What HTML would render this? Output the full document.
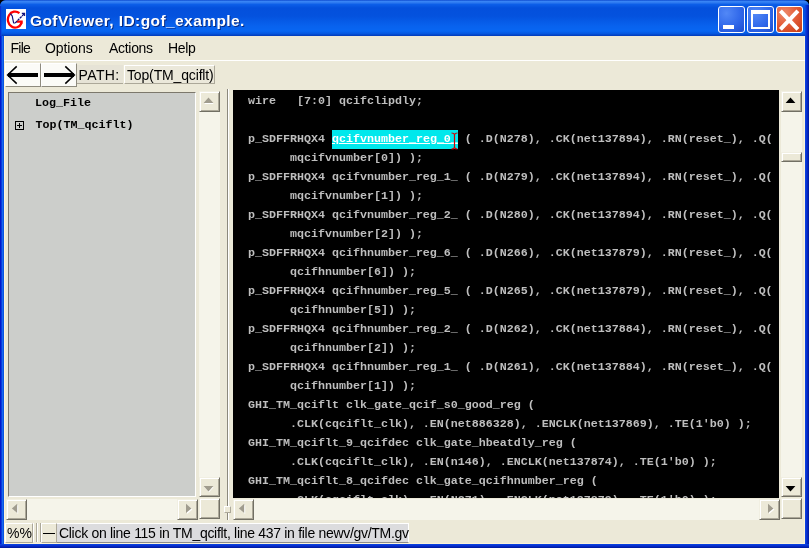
<!DOCTYPE html>
<html><head><meta charset="utf-8">
<style>
html,body{margin:0;padding:0;}
body{width:809px;height:548px;overflow:hidden;background:#000;position:relative;font-family:"Liberation Sans",sans-serif;}
.abs{position:absolute;}
#win{will-change:transform;left:0;top:0;width:809px;height:548px;background:#0a50e0;border-radius:6px 6px 0 0;overflow:hidden;}
#title{left:0;top:0;width:809px;height:36px;border-radius:6px 6px 0 0;
background:linear-gradient(to bottom,#0a46cc 0px,#3a86f6 1.3px,#2e7af0 2.6px,#0c5ee8 4.5px,#0450dc 8px,#0452de 16px,#0862ee 26px,#0866f2 31px,#0658e0 33.5px,#0340c0 35.5px,#0340c0 36px);}
#ttext{left:30px;top:11.5px;color:#fff;font-weight:bold;font-size:15.5px;letter-spacing:0.42px;white-space:nowrap;text-shadow:1px 1px 0 #0a2a80;}
#client{left:4px;top:36px;width:801px;height:508px;background:#ece9d8;box-sizing:border-box;border-left:1px solid #fbf3d8;border-right:1px solid #fbf3d8;border-bottom:1px solid #fbf3d8;}
.menu{top:40px;font-size:14px;letter-spacing:-0.3px;color:#000;white-space:nowrap;}
.btn{background:#fcfcf8;border-top:1px solid #fff;border-left:1px solid #fff;border-right:1px solid #808080;border-bottom:1px solid #808080;box-sizing:border-box;}
.mono{font-family:"Liberation Mono",monospace;font-weight:bold;}
#code{left:233px;top:90px;width:546px;height:408px;background:#000;overflow:hidden;}
#code pre{margin:0;position:absolute;left:15px;top:2px;font-family:"Liberation Mono",monospace;font-weight:bold;font-size:11.67px;line-height:19px;color:#bebebe;white-space:pre;}
.sb{background:#f4f2ea;}
.sbtn{background:#ece9d8;border-top:1px solid #fff;border-left:1px solid #fff;border-right:1px solid #716f64;border-bottom:1px solid #716f64;box-sizing:border-box;}

.track{background:#f5f4ea;}
.rb{background:#ece9d8;box-sizing:border-box;border-top:1px solid #f1efe2;border-left:1px solid #f1efe2;border-right:1px solid #716f64;border-bottom:1px solid #716f64;box-shadow:inset 1px 1px 0 #fff,inset -1px -1px 0 #aca899;}
.tb{top:6px;width:26.5px;height:27px;border-radius:3px;box-sizing:border-box;border:1px solid #fff;}
.tbb{background:radial-gradient(circle at 30% 25%,#5288f6 0%,#3068ea 55%,#1c4cd0 100%);}
.tbc{background:radial-gradient(circle at 30% 25%,#ee8a6a 0%,#e25a36 50%,#c43c16 100%);}
.lbl{font-size:14px;letter-spacing:-0.3px;color:#000;white-space:nowrap;}
</style></head><body>
<div id="win" class="abs">
<div id="title" class="abs"></div>
<div id="ttext" class="abs">GofViewer, ID:gof_example.</div>
<div class="abs" style="left:0;top:6px;width:2px;height:30px;background:linear-gradient(to right,#0a30cc 0px,#0a30cc 1px,rgba(10,70,220,0.6) 1px)"></div>
<div class="abs" style="left:0;top:36px;width:4px;height:512px;background:linear-gradient(to right,#0019cc 0px,#0019cc 1px,#0a3cdc 1px,#0a3cdc 2px,#1868ee 2px,#1868ee 3px,#0a54e0 3px)"></div>
<div class="abs" style="left:805px;top:5px;width:4px;height:543px;background:linear-gradient(to right,#0a40de 0px,#0a40de 1px,#0832d2 1px,#0832d2 2px,#0426c0 2px,#0426c0 3px,#001ca4 3px)"></div>
<div class="abs" style="left:0;top:544px;width:809px;height:4px;background:linear-gradient(to bottom,#0a40de 0px,#0a40de 1px,#0832d2 1px,#0832d2 2px,#0426c0 2px,#0426c0 3px,#001ca4 3px)"></div>
<div id="client" class="abs"></div>
<div class="abs menu" style="left:10.6px;letter-spacing:-0.8px">File</div>
<div class="abs menu" style="left:45px;letter-spacing:-0.1px">Options</div>
<div class="abs menu" style="left:109px">Actions</div>
<div class="abs menu" style="left:168px">Help</div>

<!-- title icon -->
<svg class="abs" style="left:6px;top:9px" width="20" height="20" viewBox="0 0 20 20">
<rect width="20" height="20" fill="#fff"/>
<path d="M13.4 4.2 A7.2 8 0 1 0 15.6 14 L15.6 12.7 L10.6 12.7" fill="none" stroke="#f00" stroke-width="2.3"/>
<path d="M4.4 4.6 L6.2 7 L7.6 13.8 L8.8 14.2" fill="none" stroke="#10107a" stroke-width="1.2"/>
<path d="M9.2 14 L18.2 4.8" fill="none" stroke="#10107a" stroke-width="1.3" stroke-dasharray="2.6 0.7"/>
<path d="M15.8 4.4 L18.6 4.4 L18.6 7" fill="none" stroke="#10107a" stroke-width="1.1"/>
</svg>
<!-- title buttons -->
<div class="abs tb tbb" style="left:718.2px"><div class="abs" style="left:4px;top:18px;width:11px;height:4px;background:#fff"></div></div>
<div class="abs tb tbb" style="left:747.3px"><div class="abs" style="left:3px;top:3px;width:19px;height:19px;box-sizing:border-box;border:2px solid #fff;border-top-width:4px"></div></div>
<div class="abs tb tbc" style="left:776.4px"><svg class="abs" style="left:0;top:0" width="24" height="25" viewBox="0 0 24 25"><path d="M3.4 3.8 L20.9 22.4 M20.9 3.8 L3.4 22.4" stroke="#fff" stroke-width="4" fill="none"/></svg></div>
<!-- menu separator -->
<div class="abs" style="left:4px;top:60px;width:801px;height:1px;background:#fff"></div>
<!-- toolbar -->
<div class="abs" style="left:5px;top:63px;width:36px;height:24px;background:#fbfbf7;box-sizing:border-box;border-top:1px solid #fff;border-left:1px solid #fff;border-right:1px solid #8e8b7e;border-bottom:1px solid #8e8b7e"></div>
<div class="abs" style="left:41px;top:63px;width:36px;height:24px;background:#fbfbf7;box-sizing:border-box;border-top:1px solid #fff;border-left:1px solid #fff;border-right:1px solid #8e8b7e;border-bottom:1px solid #8e8b7e"></div>
<svg class="abs" style="left:5px;top:63px" width="72" height="24" viewBox="0 0 72 24">
<path d="M3 12 L33 12" stroke="#000" stroke-width="4" fill="none"/>
<path d="M11.7 3.4 L2.6 12 L11.7 20.6" stroke="#000" stroke-width="1.5" fill="none"/>
<path d="M39 12 L69 12" stroke="#000" stroke-width="4" fill="none"/>
<path d="M60.3 3.4 L69.4 12 L60.3 20.6" stroke="#000" stroke-width="1.5" fill="none"/>
</svg>
<div class="abs" style="left:77px;top:65px;width:46px;height:19px;background:#e6e3d6;border-bottom:1px solid #aca899;box-sizing:border-box"></div>
<div class="abs lbl" style="left:78.5px;top:67px;letter-spacing:0.4px">PATH:</div>
<div class="abs" style="left:124px;top:65px;width:91px;height:19px;background:#ebe8da;box-sizing:border-box;border-top:1px solid #fff;border-left:1px solid #fff;border-right:1px solid #aca899;border-bottom:1px solid #aca899"></div>
<div class="abs lbl" style="left:127px;top:67px;letter-spacing:-0.15px">Top(TM_qciflt)</div>
<!-- left panel -->
<div class="abs" style="left:8px;top:92px;width:188px;height:405px;background:#cccecb;box-sizing:border-box;border-top:1px solid #7c786c;border-left:1px solid #7c786c;border-bottom:1px solid #fff;border-right:1px solid #fff"></div>
<div class="abs mono" style="left:35px;top:96px;font-size:11.67px;line-height:14px;color:#000;white-space:pre">Log_File</div>
<div class="abs mono" style="left:35.5px;top:118px;font-size:11.67px;line-height:14px;color:#000;white-space:pre">Top(TM_qciflt)</div>
<svg class="abs" style="left:15px;top:121px" width="9" height="9" viewBox="0 0 9 9"><rect x="0.5" y="0.5" width="8" height="8" fill="none" stroke="#000"/><path d="M2 4.5 H7 M4.5 2 V7" stroke="#000" fill="none"/></svg>
<!-- left v scrollbar -->
<div class="abs track" style="left:199px;top:91px;width:21px;height:406px"></div>
<div class="abs rb" style="left:199px;top:91px;width:21px;height:20.5px"></div>
<div class="abs rb" style="left:199px;top:477px;width:21px;height:20px"></div>
<svg class="abs" style="left:199px;top:91px" width="21" height="20"><path d="M5.3 13 L10 7.8 L14.7 13 Z" fill="#fff"/><path d="M4.6 12 L9.5 6.6 L14.4 12 Z" fill="#a09c8e"/></svg>
<svg class="abs" style="left:199px;top:477px" width="21" height="20"><path d="M5.3 10 L14.7 10 L10 15.2 Z" fill="#fff"/><path d="M4.6 9 L14.4 9 L9.5 14.4 Z" fill="#a09c8e"/></svg>
<!-- left h scrollbar -->
<div class="abs track" style="left:6px;top:499px;width:192px;height:21px"></div>
<div class="abs rb" style="left:6px;top:499px;width:21px;height:21px"></div>
<div class="abs rb" style="left:177px;top:499px;width:21px;height:21px"></div>
<svg class="abs" style="left:6px;top:499px" width="21" height="21"><path d="M12.2 5.7 L12.2 15.1 L6.9 10.4 Z" fill="#fff"/><path d="M11.2 4.7 L11.2 14.1 L5.9 9.4 Z" fill="#a09c8e"/></svg>
<svg class="abs" style="left:177px;top:499px" width="21" height="21"><path d="M10 5.7 L15.4 10.4 L10 15.1 Z" fill="#fff"/><path d="M9 4.7 L14.4 9.4 L9 14.1 Z" fill="#a09c8e"/></svg>
<div class="abs rb" style="left:199px;top:498px;width:21px;height:21px"></div>
<!-- sash -->
<div class="abs" style="left:226.5px;top:89px;width:1px;height:431px;background:#8c897c"></div>
<div class="abs" style="left:227.5px;top:89px;width:1.5px;height:431px;background:#fff"></div>
<div class="abs" style="left:224px;top:506px;width:7px;height:7px;background:#ece9d8;box-sizing:border-box;border-top:1px solid #fff;border-left:1px solid #fff;border-right:1px solid #aca899;border-bottom:1px solid #aca899"></div>
<!-- right v scrollbar -->
<div class="abs track" style="left:781px;top:91px;width:21px;height:406px"></div>
<div class="abs rb" style="left:781px;top:91px;width:21px;height:20.5px"></div>
<div class="abs rb" style="left:781px;top:477px;width:21px;height:20px"></div>
<div class="abs rb" style="left:781px;top:152px;width:21px;height:10px"></div>
<svg class="abs" style="left:781px;top:91px" width="21" height="20"><path d="M4.6 12 L9.5 6.6 L14.4 12 Z" fill="#000"/></svg>
<svg class="abs" style="left:781px;top:477px" width="21" height="20"><path d="M4.6 9 L14.4 9 L9.5 14.4 Z" fill="#000"/></svg>
<!-- right h scrollbar -->
<div class="abs track" style="left:233px;top:499px;width:547px;height:21px"></div>
<div class="abs rb" style="left:233px;top:499px;width:21px;height:21px"></div>
<div class="abs rb" style="left:759px;top:499px;width:21px;height:21px"></div>
<svg class="abs" style="left:233px;top:499px" width="21" height="21"><path d="M12.2 5.7 L12.2 15.1 L6.9 10.4 Z" fill="#fff"/><path d="M11.2 4.7 L11.2 14.1 L5.9 9.4 Z" fill="#a09c8e"/></svg>
<svg class="abs" style="left:759px;top:499px" width="21" height="21"><path d="M10 5.7 L15.4 10.4 L10 15.1 Z" fill="#fff"/><path d="M9 4.7 L14.4 9.4 L9 14.1 Z" fill="#a09c8e"/></svg>
<div class="abs rb" style="left:781px;top:498px;width:21px;height:21px"></div>
<!-- status bar -->
<div class="abs" style="left:5px;top:523px;width:28px;height:20px;box-sizing:border-box;border-top:1px solid #fff;border-left:1px solid #fff;border-right:1px solid #aca899;border-bottom:1px solid #aca899"></div>
<div class="abs lbl" style="left:7px;top:525px;letter-spacing:0px">%%</div>
<div class="abs" style="left:33px;top:523px;width:1px;height:19px;background:#fff"></div>
<div class="abs" style="left:36px;top:523px;width:1px;height:19px;background:#aca899"></div>
<div class="abs" style="left:37px;top:523px;width:1px;height:19px;background:#fff"></div>
<div class="abs" style="left:40px;top:523px;width:1px;height:19px;background:#aca899"></div>
<div class="abs" style="left:41px;top:523px;width:16px;height:20px;box-sizing:border-box;border-top:1px solid #fff;border-left:1px solid #fff;border-right:1px solid #aca899;border-bottom:1px solid #aca899"></div>
<div class="abs" style="left:43px;top:533px;width:12px;height:1.4px;background:#000"></div>
<div class="abs" style="left:57px;top:523px;width:352px;height:20px;background:#dcdcde;box-sizing:border-box;border-top:1px solid #fff;border-right:1px solid #fff;border-bottom:1px solid #8c8c8c"></div>
<div class="abs lbl" style="left:59px;top:525px">Click on line 115 in TM_qciflt, line 437 in file newv/gv/TM.gv</div>
<div id="code" class="abs"><pre>wire   [7:0] qcifclipdly;

p_SDFFRHQX4 <span style="background:#00e8ec;color:#fff;text-decoration:underline;display:inline-block;height:19px;vertical-align:top">qcifvnumber_reg_0_</span> ( .D(N278), .CK(net137894), .RN(reset_), .Q(
      mqcifvnumber[0]) );
p_SDFFRHQX4 qcifvnumber_reg_1_ ( .D(N279), .CK(net137894), .RN(reset_), .Q(
      mqcifvnumber[1]) );
p_SDFFRHQX4 qcifvnumber_reg_2_ ( .D(N280), .CK(net137894), .RN(reset_), .Q(
      mqcifvnumber[2]) );
p_SDFFRHQX4 qcifhnumber_reg_6_ ( .D(N266), .CK(net137879), .RN(reset_), .Q(
      qcifhnumber[6]) );
p_SDFFRHQX4 qcifhnumber_reg_5_ ( .D(N265), .CK(net137879), .RN(reset_), .Q(
      qcifhnumber[5]) );
p_SDFFRHQX4 qcifhnumber_reg_2_ ( .D(N262), .CK(net137884), .RN(reset_), .Q(
      qcifhnumber[2]) );
p_SDFFRHQX4 qcifhnumber_reg_1_ ( .D(N261), .CK(net137884), .RN(reset_), .Q(
      qcifhnumber[1]) );
GHI_TM_qciflt clk_gate_qcif_s0_good_reg (
      .CLK(cqciflt_clk), .EN(net886328), .ENCLK(net137869), .TE(1'b0) );
GHI_TM_qciflt_9_qcifdec clk_gate_hbeatdly_reg (
      .CLK(cqciflt_clk), .EN(n146), .ENCLK(net137874), .TE(1'b0) );
GHI_TM_qciflt_8_qcifdec clk_gate_qcifhnumber_reg (
      .CLK(cqciflt_clk), .EN(N271), .ENCLK(net137879), .TE(1'b0) );</pre><svg class="abs" style="left:217px;top:42px" width="9" height="18" viewBox="0 0 9 18"><path d="M1.5 1 Q4 1 4.5 2.5 Q5 1 7.5 1 M4.5 2 V16 M1.5 17 Q4 17 4.5 15.5 Q5 17 7.5 17" stroke="#d00000" stroke-width="1.2" fill="none"/></svg></div>
</div>
</body></html>
